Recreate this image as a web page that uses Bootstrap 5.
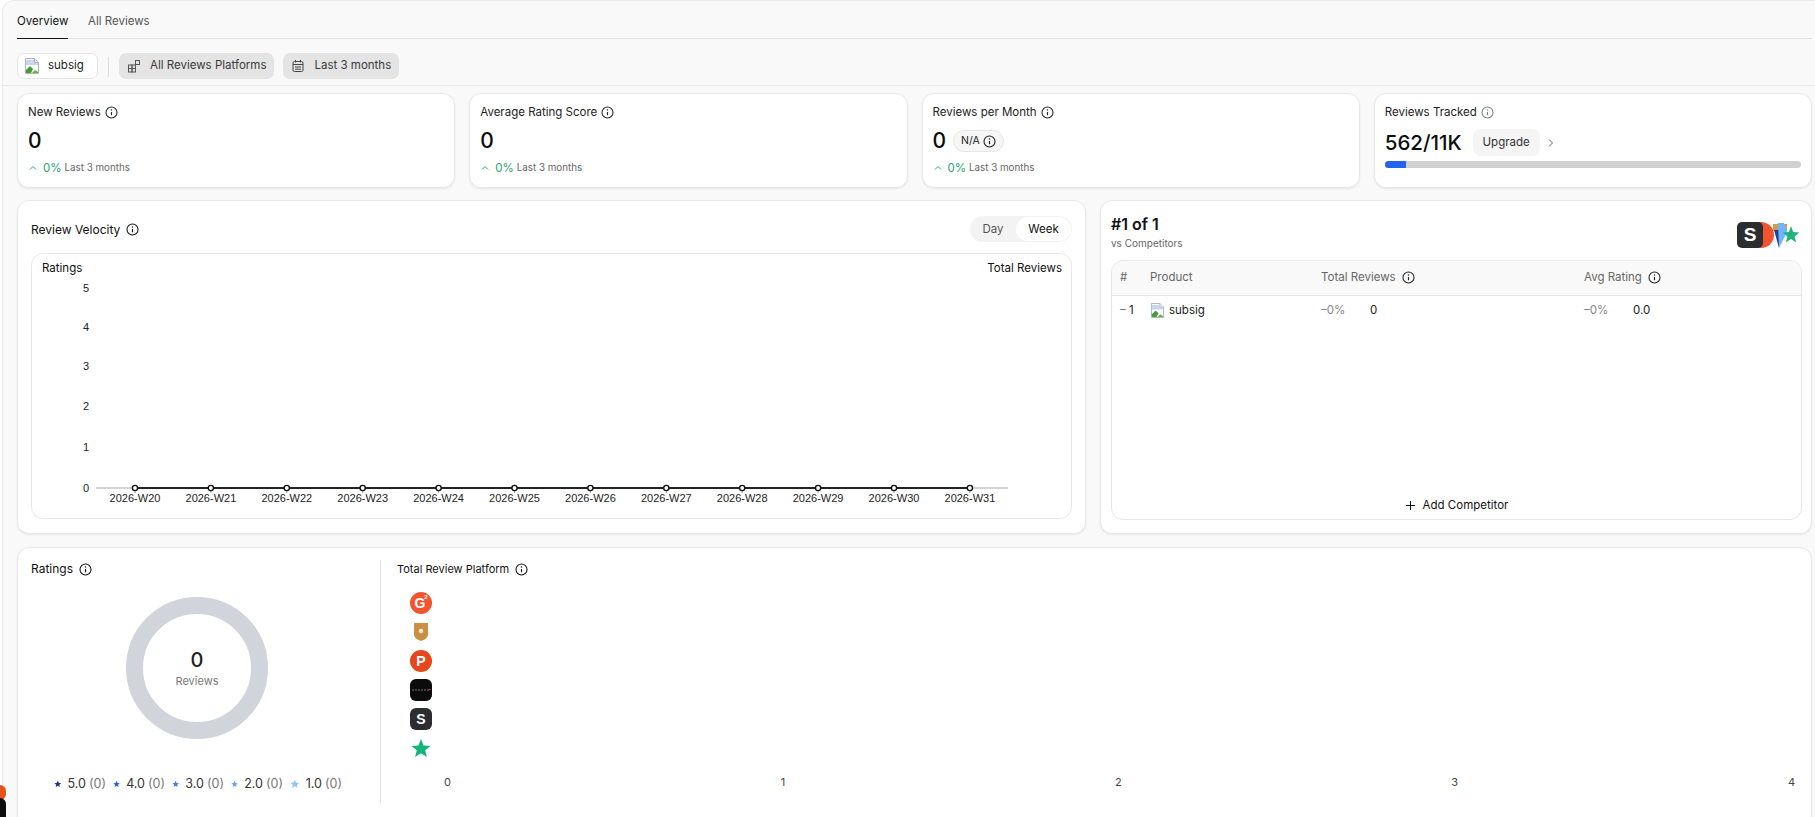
<!DOCTYPE html>
<html lang="en">
  <head>
    <meta charset="UTF-8" />
    <meta name="viewport" content="width=device-width, initial-scale=1.0" />
    <title>Reviews Overview</title>
    <link
      href="https://cdn.jsdelivr.net/npm/bootstrap@5.3.0/dist/css/bootstrap.min.css"
      rel="stylesheet"
    />
    <script src="https://cdn.jsdelivr.net/npm/bootstrap@5.3.0/dist/js/bootstrap.bundle.min.js"></script>
    <style>
      html, body { height: 817px; overflow: hidden; background: #fff; }
      body { font-family: Inter, "Liberation Sans", sans-serif; font-size: 12px; color: #1c1c1c; }
      .shell { margin-left: 2px; height: 817px; background: #f9f9f9; border: 1px solid #ececec; border-bottom: 0; border-right: 0; border-top-left-radius: 12px; overflow: hidden; }
      .tab-strip { margin: 11px 3px 0 14px; height: 27px; border-bottom: 1px solid #e4e4e4; gap: 20px; }
      .tab-item { height: 27px; line-height: 19px; color: #555; font-size: 11.5px; }
      .tab-item.on { color: #111; border-bottom: 1px solid #111; width: 51px; }
      .filter-strip { margin-top: 14px; padding: 0 0 7px 14px; border-bottom: 1px solid #e6e6e6; height: 33px; }
      .pill-white { width: 81px; height: 26px; background: #fff; border: 1px solid #e6e6e6; border-radius: 7px; font-size: 11.5px; gap: 8px; padding-left: 6px; }
      .pill-grey { height: 26px; background: #e4e4e4; border-radius: 7px; color: #3a3a3a; font-size: 11.5px; gap: 9px; padding: 0 8px; white-space: nowrap; }
      .pill-date { width: 116px; margin-left: 9px; }
      .vbar { width: 1px; height: 20px; background: #dedede; margin: 0 10px; }
      .page-body { padding: 7px 3px 0 14px; }
      .kpi-grid { display: grid; grid-template-columns: repeat(4, 1fr); gap: 14px; }
      .tile { background: #fff; border: 1px solid #e8e8e8; border-radius: 12px; box-shadow: 0 1px 2px rgba(0,0,0,.08); }
      .kpi-tile { height: 95px; padding: 9px 10px; }
      .kpi-label { font-size: 11.5px; line-height: 18px; color: #222; gap: 4px; }
      .kpi-value { font-size: 21px; font-weight: 500; line-height: 24px; color: #0c0c0c; margin-top: 8px; }
      .kpi-delta { font-size: 9.8px; color: #666; margin-top: 8px; line-height: 14px; gap: 3px; }
      .kpi-delta b { font-weight: 400; font-size: 11.5px; color: #2aa574; margin-left: 2px; }
      .na-chip { height: 22px; padding: 0 7px; border: 1px solid #e6e6e6; border-radius: 11px; background: #f6f6f6; font-size: 10.5px; gap: 3px; margin-left: 7px; margin-top: 8px; }
      .value-tracked { font-size: 20.5px; margin-top: 8px; }
      .upgrade-chip { height: 27px; width: 67px; background: #f5f5f5; border-radius: 8px; font-size: 11.5px; color: #333; margin: 8px 0 0 11px; }
      .chevron-next { margin: 8px 0 0 6px; }
      .track-bar { height: 7px; margin-top: 5px; background: #d0d0d0; border-radius: 4px; }
      .track-bar .progress-bar { background: #2563eb; }
      .mid-row { display: grid; grid-template-columns: 1069px 1fr; gap: 14px; margin-top: 12px; height: 333px; }
      .velocity-tile { padding: 16px 13px 14px 13px; }
      .section-title { font-size: 12px; color: #111; gap: 6px; line-height: 18px; }
      .toggle-wrap { height: 26px; background: #f3f3f3; border-radius: 13px; width: 102px; font-size: 11.5px; color: #555; margin-top: -1px; }
      .toggle-wrap span { flex: 1; text-align: center; line-height: 24px; height: 24px; }
      .toggle-wrap .on { background: #fff; border-radius: 12px; color: #111; margin-right: 1px; flex: 1.2; }
      .chart-box { height: 266px; margin-top: 11px; border: 1px solid #e8e8e8; border-radius: 12px; position: relative; overflow: hidden; }
      .chart-head { padding: 6px 9px 0 10px; font-size: 11.5px; color: #111; line-height: 16px; }
      .chart-svg { display: block; font-family: "Liberation Sans", Arial, sans-serif; font-size: 11px; fill: #222; }
      .rank-tile { padding: 12px 9px 9px 10px; }
      .rank-title { font-size: 16px; font-weight: 600; line-height: 22px; color: #111; }
      .rank-sub { font-size: 10px; color: #666; line-height: 14px; margin-top: 1px; }
      .rank-logos { margin: 8px 2px 0 0; }
      .rank-box { height: 260px; margin-top: 10px; border: 1px solid #e8e8e8; border-radius: 12px; overflow: hidden; position: relative; }
      .rank-table { table-layout: fixed; margin: 0; font-size: 11.5px; }
      .rank-table th { font-weight: 400; color: #666; background: #f9f9f9; height: 34px; padding: 0; vertical-align: middle; border-bottom: 1px solid #e6e6e6; }
      .rank-table td { padding: 0; height: 30px; vertical-align: middle; border: 0; color: #222; }
      .rank-table .dim { color: #888; display: inline-block; width: 49px; }
      .col-rank { width: 38px; }
      .col-product { width: 171px; }
      .col-total { width: 263px; }
      .head-info { margin-left: 3px; color: #222; }
      .add-link { position: absolute; bottom: 5px; left: 0; right: 0; font-size: 11.5px; color: #111; gap: 7px; }
      .bottom-tile { margin-top: 14px; height: 280px; }
      .ratings-pane { width: 363px; height: 243px; margin-top: 12px; border-right: 1px solid #e4e4e4; padding-left: 13px; flex-shrink: 0; }
      .donut-holder { position: relative; width: 142px; height: 142px; margin: 19px 0 0 95px; }
      .donut-ring { width: 142px; height: 142px; border: 17px solid #d1d5db; border-radius: 50%; }
      .donut-label { position: absolute; inset: 0; display: flex; flex-direction: column; align-items: center; justify-content: center; }
      .donut-num { font-size: 20px; font-weight: 500; line-height: 24px; color: #222; }
      .donut-cap { font-size: 11px; color: #7a7a7a; line-height: 16px; margin-top: 1px; }
      .legend-row { margin: 36px 0 0 23px; font-size: 12.5px; color: #333; gap: 7px; white-space: nowrap; }
      .legend-item { gap: 6px; width: 52px; }
      .legend-item i { font-style: normal; color: #777; margin-left: 3px; }
      .platform-pane { flex: 1; padding: 12px 0 0 16px; }
      .platform-title { font-size: 11px; }
      .brand-stack { margin: 14px 0 0 13px; width: 22px; gap: 7px; height: 169px; }
      .brand-chip { width: 22px; height: 22px; flex-shrink: 0; display: flex; align-items: center; justify-content: center; color: #fff; font-weight: 700; font-size: 14px; font-family: "Liberation Sans", sans-serif; }
      .brand-chip sup { font-size: 6px; top: -6px; margin-left: -1px; position: relative; vertical-align: baseline; }
      .chip-g2 { border-radius: 50%; background: #f4532f; }
      .chip-ph { border-radius: 50%; background: #e5461c; }
      .chip-s { border-radius: 6px; background: #2c2d30; }
      .axis-row { margin: 14px 16px 0 47px; font-size: 11px; color: #444; line-height: 14px; }
      .peek-dot { position: absolute; left: 0; top: 785px; width: 6px; height: 15px; background: #e4511e; border-radius: 0 8px 8px 0; }
      .peek-body { position: absolute; left: 0; top: 798px; width: 6px; height: 19px; background: #0c0c0c; border-radius: 0 6px 0 0; }
    </style>
  </head>
  <body>
    <svg width="0" height="0" class="position-absolute">
      <symbol id="info" viewBox="0 0 16 16">
        <circle cx="8" cy="8" r="6.8" fill="none" stroke="currentColor" stroke-width="1.3" />
        <circle cx="8" cy="5" r="0.9" fill="currentColor" />
        <path d="M8 7.4v4" stroke="currentColor" stroke-width="1.4" fill="none" />
      </symbol>
      <symbol id="star" viewBox="0 0 16 16">
        <path d="M8 1l2.1 4.6 5 .6-3.7 3.4 1 5L8 11.9l-4.4 2.7 1-5L.9 6.2l5-.6z" fill="currentColor" />
      </symbol>
      <symbol id="broken" viewBox="0 0 16 16">
        <path d="M1.5 .5h9l4 4v11h-13z" fill="#fff" stroke="#a9b1bb" />
        <path d="M10.5 .5v4h4" fill="#e8eef7" stroke="#a9b1bb" />
        <path d="M2 2h8v3h4v2H2z" fill="#c7d7f3" />
        <path d="M2 15v-3l4-4 3 3-2 4z" fill="#4a9a3c" />
        <path d="M8 15l3-3 3 2v1z" fill="#6ab04c" />
      </symbol>
      <symbol id="up" viewBox="0 0 10 10">
        <path d="M2 6.5l3-3 3 3" fill="none" stroke="#2aa574" stroke-width="1" />
      </symbol>
    </svg>

    <div class="peek-dot"></div>
    <div class="peek-body"></div>

    <div class="shell">
      <div class="tab-strip d-flex">
        <div class="tab-item on">Overview</div>
        <div class="tab-item">All Reviews</div>
      </div>

      <div class="filter-strip d-flex align-items-start">
        <div class="pill-white d-flex align-items-center">
          <svg width="16" height="16"><use href="#broken" /></svg>
          <span>subsig</span>
        </div>
        <div class="vbar mt-1"></div>
        <div class="pill-grey d-flex align-items-center">
          <svg width="14" height="14" viewBox="0 0 14 14" fill="none" stroke="#555">
            <rect x="1.5" y="6" width="3.5" height="3.5" /><rect x="5" y="6" width="3.5" height="3.5" /><rect x="1.5" y="9.5" width="3.5" height="3.5" /><rect x="5" y="9.5" width="3.5" height="3.5" /><rect x="8.5" y="1.5" width="4" height="4" />
          </svg>
          <span>All Reviews Platforms</span>
        </div>
        <div class="pill-grey pill-date d-flex align-items-center">
          <svg width="14" height="14" viewBox="0 0 14 14" fill="none" stroke="#444">
            <rect x="2" y="2.5" width="10" height="10" rx="1.5" /><path d="M2 5.5h10M4.5 1v2.5M9.5 1v2.5M4 8h6M4 10.2h6" />
          </svg>
          <span>Last 3 months</span>
        </div>
      </div>

      <div class="page-body">
        <div class="kpi-grid">
          <div class="tile kpi-tile">
            <div class="kpi-label d-flex align-items-center">New Reviews <svg width="13" height="13"><use href="#info" /></svg></div>
            <div class="kpi-value">0</div>
            <div class="kpi-delta d-flex align-items-center"><svg width="10" height="10"><use href="#up" /></svg><b>0%</b> Last 3 months</div>
          </div>
          <div class="tile kpi-tile">
            <div class="kpi-label d-flex align-items-center">Average Rating Score <svg width="13" height="13"><use href="#info" /></svg></div>
            <div class="kpi-value">0</div>
            <div class="kpi-delta d-flex align-items-center"><svg width="10" height="10"><use href="#up" /></svg><b>0%</b> Last 3 months</div>
          </div>
          <div class="tile kpi-tile">
            <div class="kpi-label d-flex align-items-center">Reviews per Month <svg width="13" height="13"><use href="#info" /></svg></div>
            <div class="d-flex align-items-center">
              <div class="kpi-value">0</div>
              <div class="na-chip d-flex align-items-center">N/A <svg width="13" height="13"><use href="#info" /></svg></div>
            </div>
            <div class="kpi-delta d-flex align-items-center"><svg width="10" height="10"><use href="#up" /></svg><b>0%</b> Last 3 months</div>
          </div>
          <div class="tile kpi-tile">
            <div class="kpi-label d-flex align-items-center">Reviews Tracked <svg width="13" height="13" class="text-black-50"><use href="#info" /></svg></div>
            <div class="d-flex align-items-center">
              <div class="kpi-value value-tracked">562/11K</div>
              <div class="upgrade-chip d-flex align-items-center justify-content-center">Upgrade</div>
              <svg width="10" height="10" viewBox="0 0 10 10" class="chevron-next" fill="none" stroke="#666"><path d="M3 1.5l3.5 3.5L3 8.5" /></svg>
            </div>
            <div class="progress track-bar"><div class="progress-bar" style="width: 5.1%"></div></div>
          </div>
        </div>

        <div class="mid-row">
          <div class="tile velocity-tile">
            <div class="d-flex justify-content-between align-items-center">
              <div class="section-title d-flex align-items-center">Review Velocity <svg width="13" height="13"><use href="#info" /></svg></div>
              <div class="toggle-wrap d-flex align-items-center px-0"><span>Day</span><span class="on">Week</span></div>
            </div>
            <div class="chart-box">
              <div class="chart-head d-flex justify-content-between"><span>Ratings</span><span>Total Reviews</span></div>
              <svg class="chart-svg" id="velocityChart" width="1040" height="241" viewBox="31 276 1040 241"></svg>
            </div>
          </div>

          <div class="tile rank-tile">
            <div class="d-flex justify-content-between">
              <div>
                <div class="rank-title">#1 of 1</div>
                <div class="rank-sub">vs Competitors</div>
              </div>
              <svg width="63" height="28" viewBox="0 0 63 28" class="rank-logos">
                <circle cx="24" cy="14" r="13" fill="#f0532d" />
                <rect x="36" y="3" width="14" height="7" fill="#d49a52" />
                <path d="M37 9h8l-3 18z" fill="#1f3f94" />
                <path d="M41 2h6l3 9-8 16z" fill="#6bb7ff" />
                <path d="M54 5l2.2 6 6 .4-4.6 4 1.5 6-5.1-3.4-5.1 3.4 1.5-6-4.6-4 6-.4z" fill="#1eb67d" />
                <rect x="0" y="1" width="26" height="26" rx="5" fill="#2c2d30" />
                <text x="13" y="20" text-anchor="middle" font-family="Liberation Sans, sans-serif" font-weight="700" font-size="19" fill="#fff">S</text>
              </svg>
            </div>
            <div class="rank-box">
              <table class="table rank-table">
                <colgroup><col class="col-rank" /><col class="col-product" /><col class="col-total" /><col /></colgroup>
                <thead>
                  <tr>
                    <th class="ps-2">#</th>
                    <th>Product</th>
                    <th>Total Reviews <svg width="13" height="13" class="head-info"><use href="#info" /></svg></th>
                    <th>Avg Rating <svg width="13" height="13" class="head-info"><use href="#info" /></svg></th>
                  </tr>
                </thead>
                <tbody>
                  <tr>
                    <td class="ps-2"><span class="text-secondary">–</span> 1</td>
                    <td><span class="d-flex align-items-center gap-1"><svg width="15" height="15"><use href="#broken" /></svg> subsig</span></td>
                    <td><span class="dim">–0%</span>0</td>
                    <td><span class="dim">–0%</span>0.0</td>
                  </tr>
                </tbody>
              </table>
              <div class="add-link d-flex align-items-center justify-content-center">
                <svg width="11" height="11" viewBox="0 0 11 11" stroke="#111" fill="none"><path d="M5.5 1v9M1 5.5h9" /></svg>
                Add Competitor
              </div>
            </div>
          </div>
        </div>

        <div class="tile bottom-tile d-flex">
          <div class="ratings-pane">
            <div class="section-title d-flex align-items-center">Ratings <svg width="13" height="13"><use href="#info" /></svg></div>
            <div class="donut-holder">
              <div class="donut-ring"></div>
              <div class="donut-label"><div class="donut-num">0</div><div class="donut-cap">Reviews</div></div>
            </div>
            <div class="legend-row d-flex" id="ratingLegend"></div>
          </div>
          <div class="platform-pane">
            <div class="section-title platform-title d-flex align-items-center">Total Review Platform <svg width="13" height="13"><use href="#info" /></svg></div>
            <div class="brand-stack d-flex flex-column">
              <div class="brand-chip chip-g2">G<sup>2</sup></div>
              <svg class="brand-chip" viewBox="0 0 22 22"><path d="M4 2h14v11c0 4-4 6-7 7-3-1-7-3-7-7z" fill="#c98f45" /><circle cx="11" cy="10" r="2.3" fill="#f6e6cf" /></svg>
              <div class="brand-chip chip-ph">P</div>
              <svg class="brand-chip" viewBox="0 0 22 22"><rect width="22" height="22" rx="6" fill="#0b0b0c" /><path d="M2 11h17" stroke="#777" stroke-width="1" stroke-dasharray="2 1" /><circle cx="20" cy="10.5" r=".8" fill="#e5461c" /></svg>
              <div class="brand-chip chip-s">S</div>
              <svg class="brand-chip" viewBox="0 0 22 22"><path d="M11 2l2.6 6.4 6.9.5-5.3 4.4 1.7 6.7L11 16.3 5.1 20l1.7-6.7L1.5 8.9l6.9-.5z" fill="#14b57a" /></svg>
            </div>
            <div class="axis-row d-flex justify-content-between"><span>0</span><span>1</span><span>2</span><span>3</span><span>4</span></div>
          </div>
        </div>
      </div>
    </div>

    <script>
      // velocity chart, empty weeks so the line stays on 0
      const weeks = ["W20","W21","W22","W23","W24","W25","W26","W27","W28","W29","W30","W31"];
      const chart = document.getElementById("velocityChart");
      let svg = "";
      [[5,288],[4,327],[3,366],[2,406],[1,447],[0,488]].forEach(([v, y]) => {
        svg += `<text x="88" y="${y + 4}" text-anchor="end">${v}</text>`;
      });
      svg += `<path d="M95 488H1007" stroke="#aaa" stroke-width="1" />`;
      svg += `<path d="M134 488H969" stroke="#222" stroke-width="2" />`;
      weeks.forEach((w, i) => {
        const x = 134 + i * 75.9;
        svg += `<path d="M${x} 488v5" stroke="#999" />`;
        svg += `<circle cx="${x}" cy="488" r="2.6" fill="#fff" stroke="#111" stroke-width="1.4" />`;
        svg += `<text x="${x}" y="502" text-anchor="middle">2026-${w}</text>`;
      });
      chart.innerHTML = svg;

      const legend = [["5.0","#1e3a8a"],["4.0","#2563eb"],["3.0","#3b82f6"],["2.0","#60a5fa"],["1.0","#93c5fd"]];
      document.getElementById("ratingLegend").innerHTML = legend.map(([r, c]) =>
        `<span class="legend-item d-flex align-items-center"><svg width="12" height="12" style="color:${c}"><use href="#star" /></svg><span>${r}<i>(0)</i></span></span>`
      ).join("");
    </script>
  </body>
</html>
